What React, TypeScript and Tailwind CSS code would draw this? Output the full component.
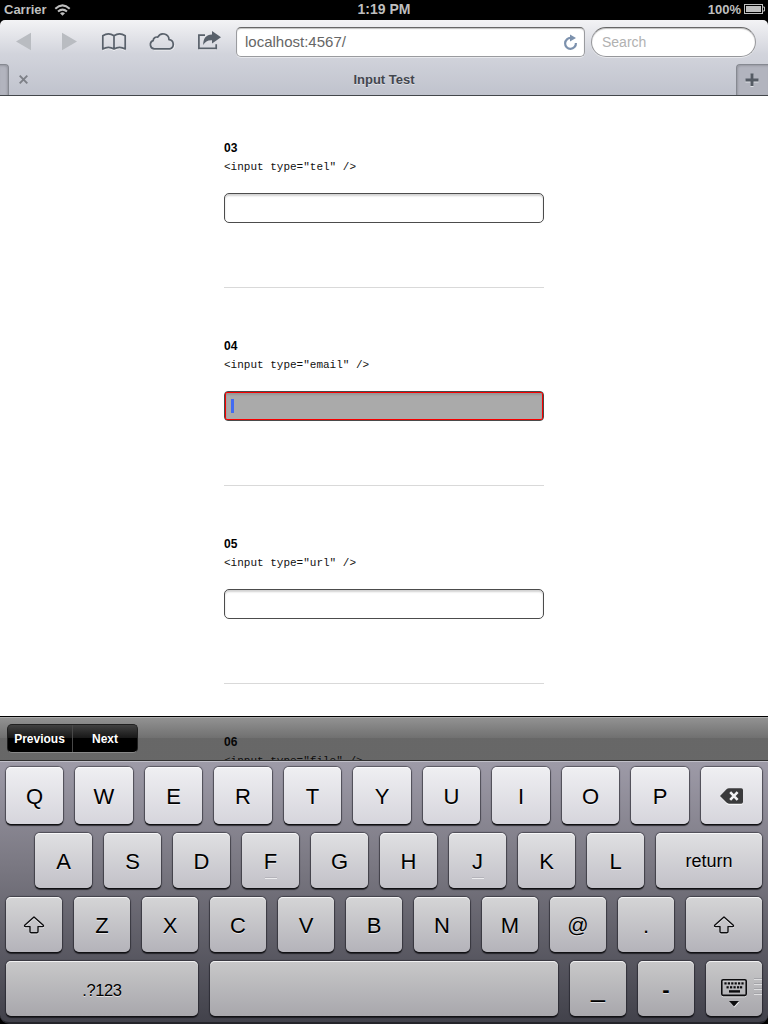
import type { ReactNode } from "react";

type KeyDef = { id: string; w: string; label: ReactNode; nub?: boolean; text?: string };

const W56 = "w-[56px]";
const W57 = "w-[57px]";
const W58 = "w-[58px]";

function ShiftIcon() {
  return (
    <svg width="22" height="19" viewBox="0 0 22 19" className="-mt-[2px] overflow-visible">
      <path
        d="M11 1 L20.3 9.2 Q20.8 10.6 19.6 10.6 H15 V15.5 Q15 16.700 13.800 16.700 H8.200 Q7 16.700 7 15.500 V10.600 H2.400 Q1.200 10.600 1.700 9.200 Z"
        transform="translate(0 1)"
        fill="none"
        stroke="#ededf0"
        strokeWidth="1.3"
      />
      <path
        d="M11 1 L20.3 9.2 Q20.8 10.6 19.6 10.6 H15 V15.5 Q15 16.700 13.800 16.700 H8.200 Q7 16.700 7 15.500 V10.600 H2.400 Q1.200 10.600 1.700 9.200 Z"
        fill="none"
        stroke="#0c0c0e"
        strokeWidth="1.4"
        strokeLinejoin="round"
      />
    </svg>
  );
}

function BackspaceIcon() {
  return (
    <svg width="23" height="17" viewBox="0 0 23 17" className="-mt-px">
      <path d="M0.5 9 L6.5 2.500 Q7.500 1.300 9 1.300 H21.300 Q23 1.300 23 3 V15 Q23 16.700 21.300 16.700 H9 Q7.500 16.700 6.500 15.500 Z" fill="#fff" />
      <path d="M0 8 L6.5 1.300 Q7.500 .2 9 .2 H21.300 Q23 .2 23 1.900 V14 Q23 15.700 21.300 15.700 H9 Q7.500 15.700 6.500 14.600 Z" fill="#3a3a3c" />
      <path d="M10.200 4.200 L17.600 11.800 M17.600 4.200 L10.200 11.800" stroke="#f2f2f4" strokeWidth="2.600" />
    </svg>
  );
}

function HideIcon() {
  const top = [4, 7.400, 10.800, 14.200, 17.600, 21];
  const mid = [6.500, 10, 13.500, 17, 20];
  return (
    <svg width="28" height="30" viewBox="0 0 28 30" className="relative top-[3px]">
      <rect x="1.800" y="2.800" width="24.400" height="16" rx="1.500" fill="none" stroke="#e8e8ea" strokeWidth="1" />
      <rect x="1.800" y="1.800" width="24.400" height="15.600" rx="1.300" fill="none" stroke="#0c0c0e" strokeWidth="1.600" />
      {top.map((x) => (
        <rect key={x} x={x + 0.4} y="4.300" width="2.200" height="2.200" fill="#0c0c0e" />
      ))}
      {mid.map((x) => (
        <rect key={x} x={x} y="8.200" width="2.200" height="2.200" fill="#0c0c0e" />
      ))}
      <rect x="9" y="12.200" width="11" height="2.400" fill="#0c0c0e" />
      <path d="M9.500 24 H19.500 L14.500 29.500 Z" fill="#ededf0" />
      <path d="M9 23 H19 L14 28.400 Z" fill="#0c0c0e" />
    </svg>
  );
}

const rows: { box: string; face: string; keys: KeyDef[] }[] = [
  {
    box: "h-[57px]",
    face: "bg-linear-to-b from-[#efeff2] to-[#d6d5dc]",
    keys: [
      { id: "Q", w: W57, label: "Q" },
      { id: "W", w: W58, label: "W" },
      { id: "E", w: W57, label: "E" },
      { id: "R", w: W58, label: "R" },
      { id: "T", w: W57, label: "T" },
      { id: "Y", w: W58, label: "Y" },
      { id: "U", w: W57, label: "U" },
      { id: "I", w: W58, label: "I" },
      { id: "O", w: W57, label: "O" },
      { id: "P", w: W58, label: "P" },
      { id: "backspace", w: "w-[61px]", label: <BackspaceIcon /> },
    ],
  },
  {
    box: "h-[55px] pl-[29px]",
    face: "bg-linear-to-b from-[#e0e0e2] to-[#c2c1c8]",
    keys: [
      { id: "A", w: W57, label: "A" },
      { id: "S", w: W57, label: "S" },
      { id: "D", w: W57, label: "D" },
      { id: "F", w: W57, label: "F", nub: true },
      { id: "G", w: W57, label: "G" },
      { id: "H", w: W57, label: "H" },
      { id: "J", w: W57, label: "J", nub: true },
      { id: "K", w: W57, label: "K" },
      { id: "L", w: W57, label: "L" },
      { id: "return", w: "w-[106px]", label: "return", text: "text-[18px] pb-[2px]" },
    ],
  },
  {
    box: "h-[55px]",
    face: "bg-linear-to-b from-[#d5d5d6] to-[#b4b3ba]",
    keys: [
      { id: "shift-left", w: W56, label: <ShiftIcon /> },
      { id: "Z", w: W56, label: "Z" },
      { id: "X", w: W56, label: "X" },
      { id: "C", w: W56, label: "C" },
      { id: "V", w: W56, label: "V" },
      { id: "B", w: W56, label: "B" },
      { id: "N", w: W56, label: "N" },
      { id: "M", w: W56, label: "M" },
      { id: "at", w: W56, label: "@", text: "text-[21px] pb-[3px]" },
      { id: "dot", w: W56, label: "." },
      { id: "shift-right", w: "w-[76px]", label: <ShiftIcon /> },
    ],
  },
  {
    box: "h-[55px]",
    face: "bg-linear-to-b from-[#c8c8c9] to-[#a8a7ac]",
    keys: [
      { id: "symbols", w: "w-[192px]", label: ".?123", text: "text-[16.5px] tracking-[-0.4px]" },
      { id: "space", w: "w-[348px]", label: "" },
      { id: "underscore", w: W56, label: "_", text: "text-[25px] pb-[4px]" },
      { id: "dash", w: W56, label: "-", text: "text-[22px] font-bold" },
      { id: "hide", w: W56, label: <HideIcon /> },
    ],
  },
];

function Key({ def, face }: { def: KeyDef; face: string }) {
  return (
    <div
      className={`relative flex h-full shrink-0 items-center justify-center rounded-[5px] text-black shadow-[inset_0_1px_0_rgba(255,255,255,0.75),0_1px_0_#111114,0_2px_1px_rgba(10,10,14,0.65),0_0_1px_1px_rgba(30,30,38,0.55)] [text-shadow:0_1px_0_rgba(255,255,255,0.6)] ${face} ${def.w} ${def.text ?? "text-[22px]"}`}
    >
      <span className="mt-[3px] leading-none">{def.label}</span>
      {def.nub && <span className="absolute bottom-[9px] h-[2px] w-[12px] border-t border-[#b4b3ba] bg-[#ececee]" />}
      {def.id === "hide" && (
        <span className="absolute top-[17px] right-0 flex w-[8px] flex-col gap-[3px]">
          <i className="h-[2px] border-t border-[#a4a4a8] bg-[#dedee0]" />
          <i className="h-[2px] border-t border-[#a4a4a8] bg-[#dedee0]" />
          <i className="h-[2px] border-t border-[#a4a4a8] bg-[#dedee0]" />
          <i className="h-[2px] border-t border-[#a4a4a8] bg-[#dedee0]" />
        </span>
      )}
    </div>
  );
}

function Section({ num, type, focused }: { num: string; type: string; focused?: boolean }) {
  return (
    <section className="h-[198px] w-[320px] shrink-0 border-b border-[#d9d9d9] pt-[50px] text-black">
      <h2 className="h-[16px] text-[12px] leading-[16px] font-bold">{num}</h2>
      <code className="mt-[4px] block h-[14px] font-['Liberation_Mono',monospace] text-[11px] leading-[14px] whitespace-pre text-[#111]">{`<input type="${type}" />`}</code>
      {focused ? (
        <div className="mt-[19px] h-[30px] rounded-[4px] border border-[#4a4a4a] bg-[#aaaaaa]">
          <div className="flex h-[28px] items-center rounded-[2px] border border-[#f80000] pl-[5px] shadow-[inset_0_2px_2px_rgba(0,0,0,0.12)]">
            <span className="h-[14px] w-[3px] bg-[#426bf2]" />
          </div>
        </div>
      ) : (
        <div className="mt-[19px] h-[30px] rounded-[5px] border border-[#4c4c4c] bg-white shadow-[inset_0_2px_2px_rgba(0,0,0,0.18)]" />
      )}
    </section>
  );
}

function StatusBar() {
  return (
    <div className="grid h-[20px] shrink-0 grid-cols-3 items-center bg-black px-[4px] text-[13px] leading-none font-bold text-[#bfbfbf]">
      <div className="flex items-center gap-[7px]">
        <span className="-mt-px">Carrier</span>
        <svg width="17" height="12" viewBox="0 0 17 12">
          <path d="M1.300 4.800 Q8.500 -2 15.700 4.800" fill="none" stroke="#bfbfbf" strokeWidth="2" />
          <path d="M4 7.600 Q8.500 3.600 13 7.600" fill="none" stroke="#bfbfbf" strokeWidth="2" />
          <path d="M6 9.200 Q8.500 7.200 11 9.200 L8.500 11.700 Z" fill="#bfbfbf" />
        </svg>
      </div>
      <span className="-mt-[2px] text-center text-[14px]">1:19 PM</span>
      <div className="flex items-center justify-end gap-[3px]">
        <span className="-mt-px">100%</span>
        <svg width="21" height="10" viewBox="0 0 21 10" className="-mt-[2px] -mr-[1px]">
          <rect x=".5" y=".5" width="18" height="9" fill="none" stroke="#bfbfbf" />
          <rect x="2" y="2" width="15" height="6" fill="#bfbfbf" />
          <path d="M19 3 H20.500 V7 H19" fill="none" stroke="#bfbfbf" />
        </svg>
      </div>
    </div>
  );
}

function ToolIcons() {
  return (
    <svg width="236" height="44" viewBox="0 0 236 44" className="shrink-0">
      <path d="M16 21.500 L31 12.800 V30.200 Z M77 21.500 L62 12.800 V30.200 Z" fill="#b9bcc1" />
      <g fill="none" stroke="#fff" strokeOpacity=".7" strokeWidth="1.600" transform="translate(0 1)">
        <path d="M102.800 29 Q108.500 25.600 114 29 Q119.500 25.600 125.200 29" />
        <path d="M154 28.800 H170 A4.300 4.300 0 0 0 174 24" />
        <path d="M198.900 28.300 H216.200" />
      </g>
      <g fill="none" stroke="#59616b" strokeWidth="1.700" strokeLinejoin="round">
        <path d="M102.800 29 V15.800 Q108.500 12 114 15.800 Q119.500 12 125.200 15.800 V29 Q119.500 25.600 114 29 Q108.500 25.600 102.800 29 Z M114 15.800 V29" />
        <path d="M154.200 28.900 A4.300 4.300 0 0 1 153.200 20.600 A3.500 3.500 0 0 1 157.800 17.200 A5.900 5.900 0 0 1 169 19.700 A4.700 4.700 0 0 1 169.800 28.900 Z" />
        <path d="M205 15.200 H198.900 V28.300 H216.200 V24.300" strokeLinejoin="miter" />
      </g>
      <path d="M212 11 L221 17.300 L212 23.600 V20.200 C207.500 20 205.200 21.600 203.200 25 C203.200 18.200 206 14.900 212 14.600 Z" fill="#59616b" />
    </svg>
  );
}

function Browser() {
  return (
    <header className="flex h-[76px] shrink-0 flex-col rounded-t-[5px] border-b border-[#43474b] bg-linear-to-b from-[#f3f3f5] via-[#d2d4dc] via-45% to-[#c0c3cd]">
      <div className="flex h-[44px] items-center">
        <ToolIcons />
        <div className="flex h-[30px] w-[349px] items-center justify-between rounded-[5px] border border-[#9a9b9f] border-t-[#666] bg-white pr-[6px] pl-[8px] text-[15px] text-[#666] shadow-[inset_0_1px_1px_rgba(0,0,0,0.25),0_1px_0_rgba(255,255,255,0.5)]">
          <span>localhost:4567/</span>
          <svg width="15" height="16" viewBox="0 0 15 16">
            <path d="M8 4 A5.400 5.400 0 1 0 12.900 9" fill="none" stroke="#7c91ad" strokeWidth="2.200" />
            <path d="M7 .5 L13 4 L7 7.500 Z" fill="#7c91ad" />
          </svg>
        </div>
        <div className="ml-[6px] flex h-[30px] w-[165px] items-center rounded-full border border-[#96979b] border-t-[#666] bg-white pl-[10px] text-[14px] text-[#b1b1b1] shadow-[inset_0_1px_1px_rgba(0,0,0,0.25),0_1px_0_rgba(255,255,255,0.5)]">
          Search
        </div>
      </div>
      <div className="flex h-[31px] items-stretch">
        <div className="w-[9px] rounded-tr-[4px] border-t border-r border-[#868991] bg-[#b2b4be] shadow-[inset_-1px_1px_2px_rgba(0,0,0,0.15)]" />
        <div className="flex flex-1 items-center pl-[10px]">
          <svg width="9" height="9" viewBox="0 0 9 9">
            <path d="M.7 .7 L8.300 8.300 M8.300 .7 L.7 8.300" stroke="#7d8087" strokeWidth="1.900" />
          </svg>
          <span className="flex-1 pl-[4px] text-center text-[13px] font-bold text-[#42464e] [text-shadow:0_1px_0_rgba(255,255,255,0.5)]">Input Test</span>
        </div>
        <div className="flex w-[32px] items-center justify-center rounded-tl-[4px] border-t border-l border-[#868991] bg-[#b2b4be] shadow-[inset_1px_1px_2px_rgba(0,0,0,0.15)]">
          <svg width="14" height="14" viewBox="0 0 14 14" className="mr-px">
            <path d="M7 1.500 V14 M.5 8 H13.500" stroke="#dfe1e6" strokeWidth="3" />
            <path d="M7 .5 V13 M.5 7 H13.500" stroke="#555b64" strokeWidth="3" />
          </svg>
        </div>
      </div>
    </header>
  );
}

export default function App() {
  return (
    <div className="flex h-[1024px] w-[768px] flex-col overflow-hidden bg-black font-['Liberation_Sans',Arial,sans-serif]">
      <StatusBar />
      <Browser />
      <main className="relative h-[665px] shrink-0 overflow-hidden bg-white">
        <div className="-mt-[6px] flex flex-col items-center">
          <Section num="03" type="tel" />
          <Section num="04" type="email" focused />
          <Section num="05" type="url" />
          <Section num="06" type="file" />
        </div>
        <div className="absolute inset-x-0 bottom-0 flex h-[45px] items-start border-t border-b border-t-black border-b-[#303030] bg-linear-to-b from-[rgba(30,30,30,0.48)] via-[rgba(16,16,16,0.6)] via-50% to-[rgba(10,10,10,0.62)] to-50% pt-[7px] pl-[7px] shadow-[inset_0_1px_0_rgba(255,255,255,0.25)]">
          <div className="flex h-[29px] w-[131px] overflow-hidden rounded-[5px] border border-[#202020] border-b-[#888] bg-linear-to-b from-[#424242] via-[#161616] via-50% to-black to-50% text-[12px] leading-[29px] font-bold text-white">
            <span className="w-[65px] border-r border-[#484848] pr-px text-center">Previous</span>
            <span className="flex-1 text-center">Next</span>
          </div>
        </div>
      </main>
      <div className="flex h-[263px] shrink-0 flex-col gap-[9px] rounded-b-[9px] border-b-2 border-[#25252b] bg-linear-to-b from-[#9e9ba8] via-[#7a7882] via-40% to-[#42424b] px-[6px] pt-[6px] shadow-[inset_0_1px_0_#c0bfc8]">
        {rows.map((row, i) => (
          <div key={i} className={`flex shrink-0 gap-[12px] ${row.box}`}>
            {row.keys.map((k) => (
              <Key key={k.id} def={k} face={row.face} />
            ))}
          </div>
        ))}
      </div>
    </div>
  );
}
